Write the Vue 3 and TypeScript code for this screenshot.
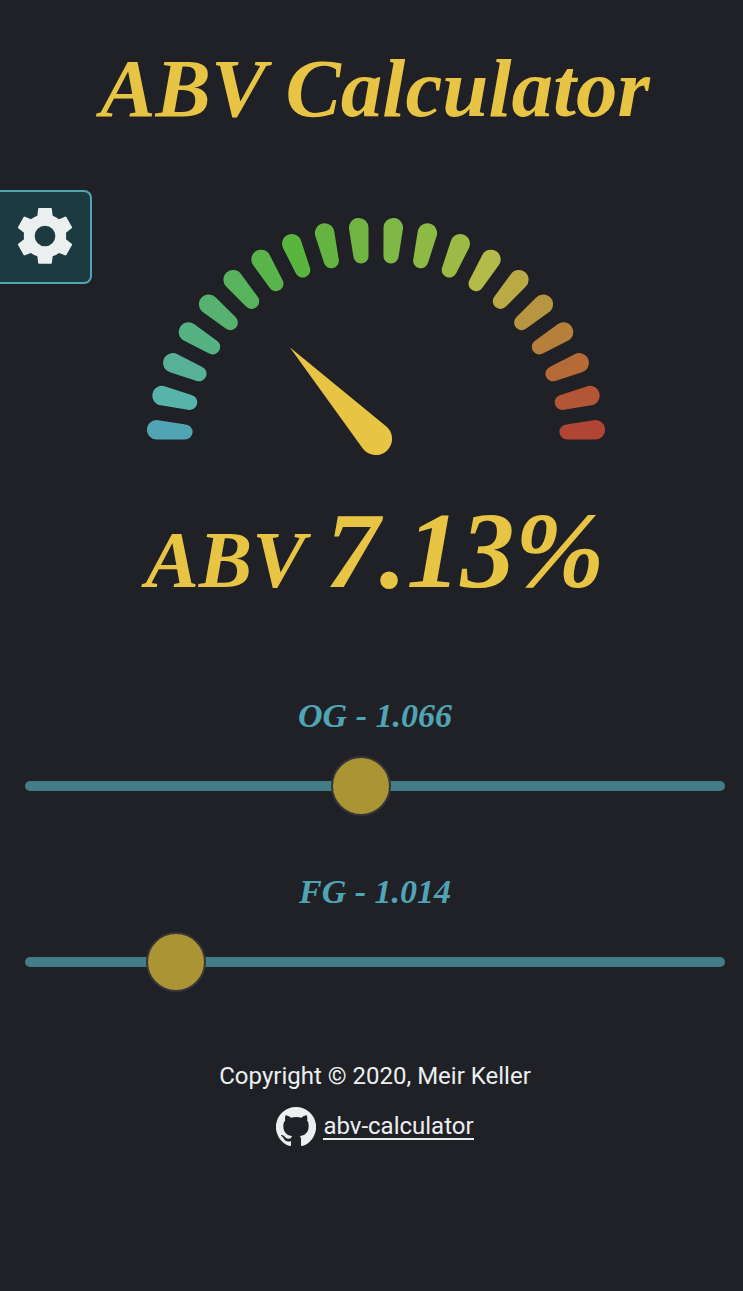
<script setup lang="ts">
import { computed, ref } from 'vue'

const MIN_GRAVITY = 0.98
const MAX_GRAVITY = 1.16
const GAUGE_MAX = 27.4

const segmentColors: string[] = [
  '#50a4b4', '#58b3ab', '#56b197', '#56b183', '#57b26f',
  '#58b35d', '#59b44c', '#5ab540', '#65b441', '#70b542',
  '#7db944', '#8db945', '#9cba46', '#b4bb48', '#baaa44',
  '#b89540', '#b67f3c', '#b56a37', '#b25636', '#b04435',
]

const segments = segmentColors.map((color, i) => ({
  color,
  transform: `translate(376 447) rotate(${184.5 + i * 9})`,
}))

const og = ref(1.066)
const fg = ref(1.014)

const abv = computed(() => {
  const value = ((76.08 * (og.value - fg.value)) / (1.775 - og.value)) * (fg.value / 0.794)
  return Math.max(0, value)
})

const needleTransform = computed(() => {
  const angle = Math.min(180, (abv.value / GAUGE_MAX) * 180)
  return `translate(376 439) rotate(${angle})`
})
</script>

<template>
  <main class="page">
    <h1 class="title">ABV Calculator</h1>

    <section class="stage">
      <button class="settings" type="button" aria-label="Settings">
        <svg viewBox="51 84 168 168" aria-hidden="true">
          <path
            fill-rule="evenodd"
            d="M117 84H153Q155 84 155.500 86L158 107Q168 111 177 118L195 110Q198 109 199 111L216 141Q217 143 215 145L198 158Q199 168 198 178L215 191Q217 193 216 195L199 225Q198 227 195 226L177 219Q168 226 158 229L155.500 249Q155 251 153 251H117Q115 251 114.500 249L112 229Q102 226 93 219L75 226Q72 227 71 225L54 195Q53 193 55 191L72 178Q71 168 72 158L55 145Q53 143 54 141L71 111Q72 109 75 110L93 118Q102 111 112 107L114.500 86Q115 84 117 84ZM135 137A31 31 0 1 0 135 199A31 31 0 1 0 135 137Z"
          />
        </svg>
      </button>

      <div class="gauge-wrap">
        <svg class="gauge" viewBox="144 217 462 240" role="img" aria-label="ABV gauge">
          <path
            v-for="(segment, i) in segments"
            :key="i"
            :fill="segment.color"
            :transform="segment.transform"
            d="M191.600 -7.6L219 -9.7A9.75 9.75 0 1 1 219 9.7L191.600 7.6A7.6 7.6 0 0 1 191.600 -7.6Z"
          />
          <path
            class="needle"
            :transform="needleTransform"
            d="M-126 0L-2.1 -16.2A16.3 16.3 0 1 1 -2.1 16.2Z"
          />
        </svg>
      </div>
    </section>

    <output class="readout" for="og fg">
      <span class="readout-label">ABV</span>
      <span class="readout-value">{{ abv.toFixed(2) }}%</span>
    </output>

    <section class="controls">
      <div class="control">
        <label for="og">OG - {{ og.toFixed(3) }}</label>
        <input id="og" v-model.number="og" type="range" :min="MIN_GRAVITY" :max="MAX_GRAVITY" step="0.001" />
      </div>
      <div class="control">
        <label for="fg">FG - {{ fg.toFixed(3) }}</label>
        <input id="fg" v-model.number="fg" type="range" :min="MIN_GRAVITY" :max="MAX_GRAVITY" step="0.001" />
      </div>
    </section>

    <footer class="footer">
      <p>Copyright © 2020, Meir Keller</p>
      <div class="repo">
        <svg viewBox="0 0 120 120" aria-hidden="true">
          <path
            d="M60 0A60 60 0 0 0 41 117C43 118 45 116 45 114V103C30 106 26 100 22 93C20 89 17 87 15 86C14 83 20 83 24 87C29 92 31 97 45 94C45 92 47 88 49 87C34 85 22 78 22 57C22 50 24 45 28 40C26 35 27 30 29 25C34 25 40 28 45 32C55 29 66 29 76 32C81 28 87 25 92 25C94 30 95 35 93 40C97 45 98 50 98 57C98 78 86 85 71 87C74 89 75 93 75 98V114C75 116 77 118 79 117A60 60 0 0 0 60 0Z"
          />
        </svg>
        <a href="#abv-calculator">abv-calculator</a>
      </div>
    </footer>
  </main>
</template>

<style>
body {
  margin: 0;
  background: #202126;
}
</style>

<style scoped>
.page {
  --gold: #e8c444;
  --teal: #50a4b4;
  --light: #ebeff0;
  --display: "Liberation Serif", serif;
  box-sizing: border-box;
  min-height: 100vh;
  background: #202126;
  color: var(--light);
  font-family: Roboto, sans-serif;
}

.title {
  margin: 0;
  padding: 38px 18px 52px 25px;
  color: var(--gold);
  font: italic bold 83px/100px var(--display);
  text-align: center;
}

.stage {
  display: grid;
  align-items: start;
}

.settings,
.gauge-wrap {
  grid-area: 1 / 1;
}

.settings {
  z-index: 1;
  display: flex;
  box-sizing: border-box;
  width: 92px;
  height: 94px;
  padding: 16px 16px 16px 17px;
  border: 2px solid var(--teal);
  border-left: 0;
  border-radius: 0 8px 8px 0;
  background: #1d3a40;
  cursor: pointer;
}

.settings svg {
  width: 56px;
  height: 56px;
  fill: var(--light);
}

.gauge-wrap {
  display: flex;
  justify-content: center;
  padding: 27px 18px 0 25px;
}

.gauge {
  width: 462px;
  max-width: 100%;
}

.needle {
  fill: var(--gold);
}

.readout {
  display: flex;
  justify-content: center;
  align-items: baseline;
  gap: 20px;
  padding: 34px 18px 0 25px;
  color: var(--gold);
  font: italic bold 80px/120px var(--display);
}

.readout-value {
  font-size: 108px;
}

.controls {
  padding: 76px 18px 0 25px;
}

.control {
  display: flex;
  flex-direction: column;
  gap: 20px;
  margin-bottom: 56px;
}

.control label {
  color: var(--teal);
  font: italic bold 34px/40px var(--display);
  text-align: center;
}

.control input {
  width: 100%;
  height: 60px;
  margin: 0;
  appearance: none;
  background: transparent;
  cursor: pointer;
}

.control input::-webkit-slider-runnable-track {
  height: 10px;
  border-radius: 5px;
  background: #427d88;
}

.control input::-webkit-slider-thumb {
  box-sizing: border-box;
  width: 60px;
  height: 60px;
  margin-top: -25px;
  appearance: none;
  border: 2px solid #35353a;
  border-radius: 50%;
  background: #ab9433;
}

.footer {
  padding: 12px 18px 0 25px;
  font-size: 24px;
  line-height: 32px;
  text-align: center;
}

.footer p {
  margin: 0;
}

.repo {
  display: flex;
  justify-content: center;
  align-items: center;
  gap: 7px;
  margin-top: 15px;
}

.repo svg {
  width: 40px;
  height: 40px;
  fill: var(--light);
}

.repo a {
  border-bottom: 2px solid var(--light);
  color: var(--light);
  line-height: 24px;
  text-decoration: none;
}
</style>
